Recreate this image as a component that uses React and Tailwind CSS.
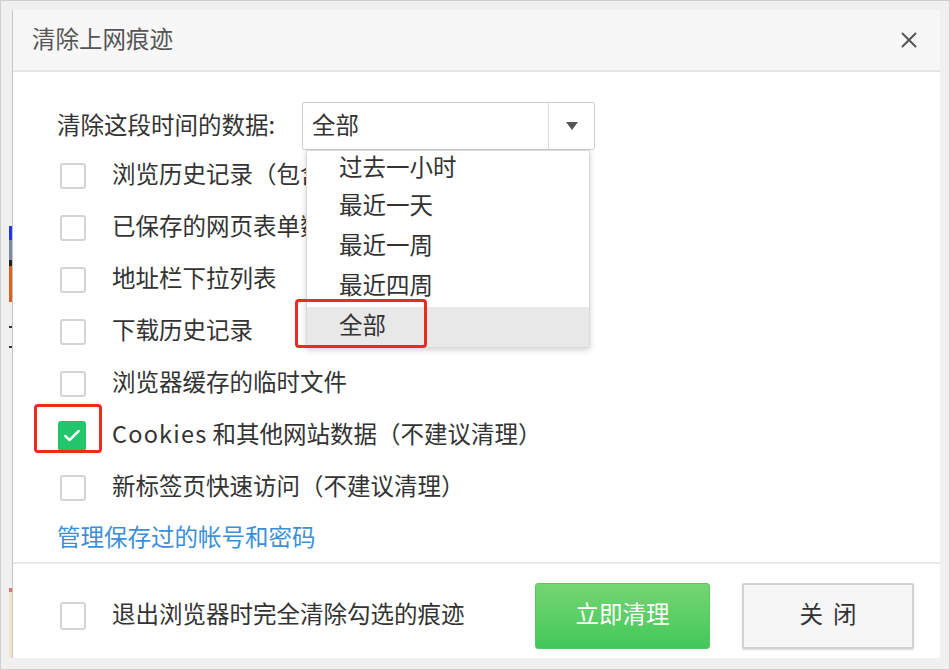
import { X, Check } from 'lucide-react'

const OPTIONS = [
  { label: '浏览历史记录（包含最近关闭的标签）', clip: true },
  { label: '已保存的网页表单数据', clip: true },
  { label: '地址栏下拉列表' },
  { label: '下载历史记录' },
  { label: '浏览器缓存的临时文件' },
  { latin: 'Cookies', label: ' 和其他网站数据（不建议清理）', checked: true, marked: true },
  { label: '新标签页快速访问（不建议清理）' },
]

const RANGES = ['过去一小时', '最近一天', '最近一周', '最近四周', '全部']

function Box({ checked }) {
  if (checked) {
    return (
      <div className="w-[30px] h-[30px] rounded-[3px] bg-[#22c56c] flex items-center justify-center -ml-[2px]">
        <Check size={20} strokeWidth={3} className="text-white" />
      </div>
    )
  }
  return <div className="w-[26px] h-[26px] rounded-[3px] border-2 border-[#d4d4d4] bg-white" />
}

export default function App() {
  return (
    <div
      className="w-[950px] h-[670px] bg-[#f0f0f0] border border-[#cfcfcf] flex pt-[9px] pr-[9px] pb-[11px] overflow-hidden"
      style={{ fontFamily: '"Noto Sans CJK SC", "Noto Sans", sans-serif' }}
    >
      {/* page behind the dialog */}
      <div className="w-[11px] flex flex-col items-end">
        <div className="h-[216px]" />
        <div className="w-[3px] h-[14px] bg-[#2233ee]" />
        <div className="w-[3px] h-[20px] bg-[#7a8aa0]" />
        <div className="w-[3px] h-[6px] bg-[#222]" />
        <div className="w-[3px] h-[36px] bg-[#d8641c]" />
        <div className="h-[24px]" />
        <div className="w-[3px] h-[2px] bg-[#333]" />
        <div className="h-[18px]" />
        <div className="w-[3px] h-[2px] bg-[#333]" />
        <div className="h-[240px]" />
        <div className="w-[3px] h-[4px] bg-[#d9756a]" />
        <div className="w-[3px] flex-1 bg-[#f3e4cc]" />
      </div>

      <div className="flex-1 bg-white border-l border-[#c6c6c6] flex flex-col">
        {/* header */}
        <div className="h-[62px] bg-[#f7f7f7] border-b-2 border-[#e6e6e6] flex items-center justify-between pl-[19px] pr-[18px]">
          <span className="text-[23.5px] text-[#555] pb-[2px]">清除上网痕迹</span>
          <X size={26} strokeWidth={1.8} className="text-[#555]" />
        </div>

        {/* body */}
        <div className="flex-1 pt-[30px] pl-[44px]">
          <div className="flex items-center h-[48px]">
            <span className="text-[23.5px] text-[#333] w-[245px] pb-[3px]">清除这段时间的数据:</span>
            <div className="relative">
              <div className="w-[293px] h-[48px] border border-[#cfcfcf] rounded-[2px] bg-white flex items-stretch">
                <div className="flex-1 flex items-center pl-[9px] pb-[3px] text-[23.5px] text-[#333]">全部</div>
                <div className="w-[46px] border-l border-[#dcdcdc] flex items-center justify-center">
                  <div className="w-0 h-0 border-l-[6px] border-r-[6px] border-t-[8px] border-l-transparent border-r-transparent border-t-[#555]" />
                </div>
              </div>
              <div className="absolute left-[4px] top-[48px] w-[284px] bg-white border border-[#dadada] shadow-[0_2px_6px_rgba(0,0,0,0.18)] z-10">
                {RANGES.map((r, i) => (
                  <div
                    key={r}
                    className={`flex items-center pl-[32px] pb-[4px] text-[23.5px] text-[#333] ${i === 0 ? 'h-[36px]' : 'h-[40px]'} ${i === RANGES.length - 1 ? 'bg-[#e8e8e8]' : ''}`}
                  >
                    {r}
                  </div>
                ))}
                <div className="absolute left-[-12px] top-[148px] w-[132px] h-[49px] border-[3px] border-[#ec2a20] rounded-[4px]" />
              </div>
            </div>
          </div>

          <div className="flex flex-col">
            {OPTIONS.map((o) => (
              <div key={o.label} className="h-[52px] flex items-center pl-[3px]">
                <div className="relative w-[26px] flex items-center">
                  <Box checked={o.checked} />
                  {o.marked && (
                    <div className="absolute left-[-26px] top-[-17px] w-[68px] h-[49px] border-[3px] border-[#ec2a20] rounded-[4px]" />
                  )}
                </div>
                <span
                  className={`ml-[26px] pb-[4px] text-[23.5px] text-[#333] whitespace-nowrap ${o.clip ? 'w-[194px] overflow-hidden' : ''}`}
                >
                  {o.latin && <span className="tracking-[1.2px]">{o.latin}</span>}
                  {o.label}
                </span>
              </div>
            ))}
          </div>

          <div className="h-[48px] flex items-center pb-[3px] text-[23.5px] text-[#3b8fd9]">管理保存过的帐号和密码</div>
        </div>

        {/* footer */}
        <div className="h-[96px] border-t-2 border-[#e8e8e8] flex items-center pt-[9px] pl-[47px] pr-[26px]">
          <div className="w-[26px] h-[28px] rounded-[3px] border-2 border-[#d4d4d4]" />
          <span className="ml-[26px] pb-[3px] text-[23.5px] text-[#333] whitespace-nowrap">退出浏览器时完全清除勾选的痕迹</span>
          <div className="flex-1" />
          <button className="w-[175px] h-[66px] pb-[3px] rounded-[3px] border border-[#58c95e] bg-gradient-to-b from-[#74d573] to-[#40c85a] text-white text-[23.5px]">
            立即清理
          </button>
          <button className="ml-[32px] w-[172px] h-[66px] pb-[3px] rounded-[2px] border-2 border-[#d2d2d2] bg-[#f6f6f6] shadow-[0_1px_2px_rgba(0,0,0,0.15)] text-[#333] text-[23.5px] tracking-[10px] pl-[10px]">
            关闭
          </button>
        </div>
      </div>
    </div>
  )
}
